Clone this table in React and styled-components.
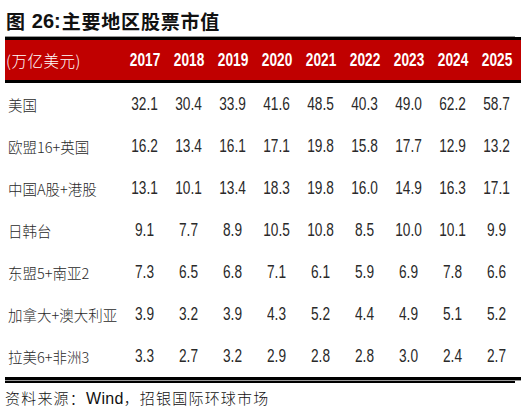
import styled, { createGlobalStyle } from "styled-components";

const GlobalStyle = createGlobalStyle`
  body {
    margin: 0;
    background: #fff;
  }
`

const Page = styled.div`
  width: 526px;
  height: 415px;
  background: #fff;
  padding-top: 9px;
  box-sizing: border-box;
`

const Title = styled.div`
  font-family: "Noto Sans CJK SC", sans-serif;
  font-weight: 700;
  font-size: 19px;
  line-height: 24px;
  height: 24px;
  padding-left: 6px;
  color: #111;
  display: flex;
  align-items: center;
  letter-spacing: 0.8px;
`

const TitleNum = styled.span`
  font-family: "Liberation Sans", sans-serif;
  font-weight: 700;
  font-size: 20px;
  margin-left: 6px;
  margin-right: 1px;
  letter-spacing: 0;
`

const Table = styled.div`
  margin-top: 3px;
  margin-left: 5px;
  width: 516px;
`

const Grid = styled.div`
  display: grid;
  grid-template-columns: 118px repeat(9, 44px);
  align-items: center;
`

const HeadTopLine = styled.div`
  height: 1px;
  width: 510px;
  background: #999;
`

const Head = styled(Grid)`
  height: 40px;
  background: #c00000;
  border-top: 3px solid #000;
  border-bottom: 3px solid #000;
  color: #fff;
`

const Unit = styled.div`
  font-family: "Noto Sans CJK SC", sans-serif;
  font-weight: 300;
  font-size: 15.5px;
  padding-left: 1px;
  letter-spacing: 0.5px;
`

const Narrow = styled.span`
  display: inline-block;
  transform: scaleX(0.76);
  transform-origin: center;
  font-weight: ${(p) => (p.$bold ? 700 : 400)};
`

const Year = styled.div`
  font-family: "Liberation Sans", sans-serif;
  font-size: 18px;
  text-align: center;
`

const Row = styled(Grid)`
  height: 42px;
  color: #2a2a2a;
`

const Label = styled.div`
  font-family: "Noto Sans CJK SC", sans-serif;
  font-weight: 300;
  font-size: 14.5px;
  padding-left: 3px;
  white-space: nowrap;
`

const Cell = styled.div`
  font-family: "Liberation Sans", sans-serif;
  font-size: 18px;
  text-align: center;
`

const BottomRule = styled.div`
  height: 3px;
  background: #000;
  border-bottom: 1px solid #999;
  &::after {
    content: "";
    display: block;
    position: relative;
    top: 4px;
    width: 510px;
    height: 2px;
    background: #000;
  }
`

const Source = styled.div`
  margin-top: 6px;
  padding-left: 5px;
  font-family: "Noto Sans CJK SC", sans-serif;
  font-weight: 300;
  font-size: 15px;
  letter-spacing: 1.2px;
  color: #111;
`

const SourceLatin = styled.span`
  font-family: "Liberation Sans", sans-serif;
  font-weight: 400;
  font-size: 16px;
  letter-spacing: 0.3px;
`

const years = [2017, 2018, 2019, 2020, 2021, 2022, 2023, 2024, 2025]

const rows = [
  { name: '美国', values: ['32.1', '30.4', '33.9', '41.6', '48.5', '40.3', '49.0', '62.2', '58.7'] },
  { name: '欧盟16+英国', values: ['16.2', '13.4', '16.1', '17.1', '19.8', '15.8', '17.7', '12.9', '13.2'] },
  { name: '中国A股+港股', values: ['13.1', '10.1', '13.4', '18.3', '19.8', '16.0', '14.9', '16.3', '17.1'] },
  { name: '日韩台', values: ['9.1', '7.7', '8.9', '10.5', '10.8', '8.5', '10.0', '10.1', '9.9'] },
  { name: '东盟5+南亚2', values: ['7.3', '6.5', '6.8', '7.1', '6.1', '5.9', '6.9', '7.8', '6.6'] },
  { name: '加拿大+澳大利亚', values: ['3.9', '3.2', '3.9', '4.3', '5.2', '4.4', '4.9', '5.1', '5.2'] },
  { name: '拉美6+非洲3', values: ['3.3', '2.7', '3.2', '2.9', '2.8', '2.8', '3.0', '2.4', '2.7'] },
]

const App = () => {
  return (
    <>
      <GlobalStyle />
      <Page>
        <Title>
          图<TitleNum>26:</TitleNum>主要地区股票市值
        </Title>
        <Table>
          <HeadTopLine />
          <Head>
            <Unit>(万亿美元)</Unit>
            {years.map((y) => (
              <Year key={y}><Narrow $bold>{y}</Narrow></Year>
            ))}
          </Head>
          {rows.map((r) => (
            <Row key={r.name}>
              <Label>{r.name}</Label>
              {r.values.map((v, i) => (
                <Cell key={i}><Narrow>{v}</Narrow></Cell>
              ))}
            </Row>
          ))}
          <BottomRule />
        </Table>
        <Source>
          资料来源：<SourceLatin>Wind</SourceLatin>，招银国际环球市场
        </Source>
      </Page>
    </>
  )
}

export default App
